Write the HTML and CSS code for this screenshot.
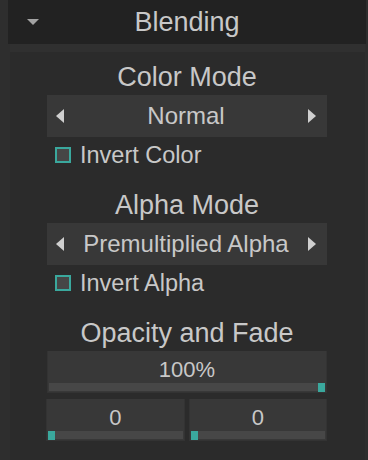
FILE: index.html
```html
<!DOCTYPE html>
<html lang="en">

<head>
  <meta charset="UTF-8">
  <title>Blending</title>
  <link rel="stylesheet" href="styles.css">
</head>

<body>
  <div class="panel">
    <div class="panel-head">
      <span class="caret"></span>
      <h1>Blending</h1>
    </div>

    <div class="panel-body">
      <section class="group">
        <h2>Color Mode</h2>
        <div class="select">
          <span class="arrow arrow-left"></span>
          <span class="select-value">Normal</span>
          <span class="arrow arrow-right"></span>
        </div>
        <label class="check"><span class="box"></span>Invert Color</label>
      </section>

      <section class="group">
        <h2>Alpha Mode</h2>
        <div class="select">
          <span class="arrow arrow-left"></span>
          <span class="select-value">Premultiplied Alpha</span>
          <span class="arrow arrow-right"></span>
        </div>
        <label class="check"><span class="box"></span>Invert Alpha</label>
      </section>

      <section class="group">
        <h2>Opacity and Fade</h2>
        <div class="slider">
          <span class="slider-value">100%</span>
          <div class="track"><span class="thumb" style="left: calc(100% - 7px)"></span></div>
        </div>
        <div class="slider-row">
          <div class="slider slider-small">
            <span class="slider-value">0</span>
            <div class="track"><span class="thumb" style="left: 0"></span></div>
          </div>
          <div class="slider slider-small">
            <span class="slider-value">0</span>
            <div class="track"><span class="thumb" style="left: 0"></span></div>
          </div>
        </div>
      </section>
    </div>
  </div>
</body>

</html>
```

FILE: styles.css
```css
*,
*::before,
*::after {
  box-sizing: border-box;
}

html,
body {
  height: 100%;
}

body {
  margin: 0;
  background: #2e2e2e;
  font-family: "Liberation Sans", Arial, sans-serif;
  color: #c8c8c8;
  overflow: hidden;
}

.panel {
  display: flex;
  flex-direction: column;
  height: 100%;
  margin: 0 2px 0 8px;
}

.panel-head {
  position: relative;
  display: flex;
  align-items: center;
  justify-content: center;
  height: 44px;
  background: #222;
}

.caret {
  position: absolute;
  left: 19px;
  top: 19px;
  width: 0;
  height: 0;
  border-left: 6px solid transparent;
  border-right: 6px solid transparent;
  border-top: 6px solid #a3a3a3;
}

h1 {
  margin: 0;
  font-size: 27px;
  font-weight: normal;
  line-height: 32px;
}

.panel-body {
  flex: 1;
  margin: 0 1px 0 2px;
  border-top: 8px solid #303030;
  background: #2b2b2b;
  padding: 9px 0 0 37px;
}

.group {
  width: 280px;
  height: 128px;
}

h2 {
  margin: 0 0 2px;
  font-size: 27px;
  font-weight: normal;
  line-height: 32px;
  text-align: center;
}

.select {
  display: flex;
  align-items: center;
  justify-content: space-between;
  height: 42px;
  padding: 0 11px 0 9px;
  background: #383838;
}

.select-value {
  font-size: 24px;
}

.arrow {
  width: 0;
  height: 0;
  border-top: 7px solid transparent;
  border-bottom: 7px solid transparent;
}

.arrow-left {
  border-right: 8px solid #cfcfcf;
}

.arrow-right {
  border-left: 8px solid #cfcfcf;
}

.check {
  display: flex;
  align-items: center;
  gap: 9px;
  margin-top: 5px;
  padding-left: 8px;
  font-size: 23.5px;
  line-height: 26px;
}

.box {
  width: 16px;
  height: 16px;
  border: 2px solid #3aa89d;
  background: #464646;
}

.slider {
  position: relative;
  display: flex;
  flex-direction: column;
  align-items: center;
  height: 42px;
  padding: 6px 1px 1px;
  background: #383838;
  border: 1px solid #333;
  border-top: 0;
}

.slider-value {
  font-size: 22px;
  line-height: 26px;
  flex: 1;
}

.track {
  position: relative;
  align-self: stretch;
  height: 9px;
  background: #474747;
}

.thumb {
  position: absolute;
  top: 0;
  width: 7px;
  height: 9px;
  background: #3aa89d;
}

.slider-row {
  display: flex;
  gap: 4px;
  margin: 6px 0 0 -1px;
}

.slider-small {
  flex: 1;
}
```
